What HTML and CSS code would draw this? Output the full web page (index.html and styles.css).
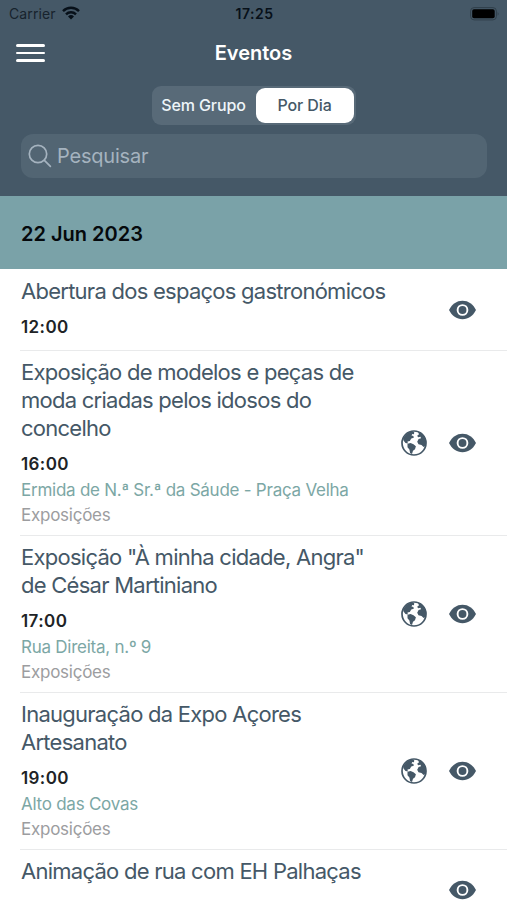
FILE: index.html
```html
<!DOCTYPE html>
<html lang="pt">
<head>
<meta charset="utf-8">
<meta name="viewport" content="width=device-width, initial-scale=1">
<title>Eventos</title>
<link rel="stylesheet" href="styles.css">
</head>
<body>
<svg class="defs" aria-hidden="true">
  <symbol id="eye" viewBox="0 0 28 20">
    <path d="M.5 10C3.500 4.200 8 .8 14 .8S24.500 4.200 27.500 10C24.500 15.800 20 19.200 14 19.200S3.500 15.800 .5 10Z" fill="currentColor"/>
    <circle cx="14" cy="10" r="4.900" fill="none" stroke="#fff" stroke-width="1.900"/>
  </symbol>
  <symbol id="globe" viewBox="0 0 26 26">
    <circle cx="13" cy="13" r="12" fill="#fff" stroke="currentColor" stroke-width="1.700"/>
    <path d="M2 8.500 5.500 3.700 10 1.300 13.200 2 13 4.300 11.300 4 10.500 5.400 12.400 5.900 12.800 7.800 10.300 8.600 8.800 10.900 6.500 11.600 6.800 13.400 4.500 13 2.500 10.500Z" fill="currentColor"/>
    <path d="M6.500 13.700 9.500 13 12.500 14.200 14.900 16.200 14 19.200 12 20.800 11 23.900 9.100 23 8.400 19.500 6.500 17.300Z" fill="currentColor"/>
    <path d="M16.800 1.500 20.500 3 23.700 6.500 25 11.200 24.800 15.700 22.600 17 20.500 14.900 17.500 14.300 16.200 11.800 17.600 9 20 8.300 19.500 6.700 17.100 7.200 16.200 5.700 18 4.300Z" fill="currentColor"/>
  </symbol>
</svg>
<header class="header">
  <div class="status">
    <div class="carrier"><span>Carrier</span>
      <svg class="wifi" viewBox="0 0 18 14"><g fill="none" stroke="currentColor" stroke-width="2.400"><path d="M1 5.100A11.400 11.400 0 0 1 17 5.100"/><path d="M4 8.300A7.100 7.100 0 0 1 14 8.300"/></g><path d="M9 13.500 6 10.500A4.300 4.300 0 0 1 12 10.500Z" fill="currentColor"/></svg>
    </div>
    <time>17:25</time>
    <svg class="battery" viewBox="0 0 30 14"><rect x=".6" y=".6" width="25.800" height="12.300" rx="3.500" fill="none" stroke="#303f4a" stroke-width="1"/><rect x="2.200" y="2.200" width="22.500" height="9.100" rx="1.800"/><path d="M27.700 4.700Q29.500 6.700 27.700 8.700Z" fill="#303f4a"/></svg>
  </div>
  <nav class="navbar">
    <button class="menu" aria-label="Menu"><i></i><i></i><i></i></button>
    <h1>Eventos</h1>
  </nav>
  <div class="segments"><span class="segment">Sem Grupo</span><span class="segment active">Por Dia</span></div>
  <div class="search">
    <svg viewBox="0 0 24 24"><g fill="none" stroke="currentColor" stroke-width="1.700" stroke-linecap="round"><circle cx="10" cy="10" r="8.700"/><path d="m16.400 16.400 6 6"/></g></svg>
    <span>Pesquisar</span>
  </div>
</header>
<main>
  <h2 class="day"><span>22 Jun 2023</span></h2>
  <article class="event short first">
    <div class="info"><h3>Abertura dos espaços gastronómicos</h3><time>12:00</time></div>
    <div class="icons"><svg class="eye"><use href="#eye"/></svg></div>
  </article>
  <article class="event tall">
    <div class="info"><h3>Exposição de modelos e peças de<br>moda criadas pelos idosos do<br>concelho</h3><time>16:00</time><p class="place">Ermida de N.ª Sr.ª da Sáude - Praça Velha</p><p class="category">Exposições</p></div>
    <div class="icons"><svg class="globe"><use href="#globe"/></svg><svg class="eye"><use href="#eye"/></svg></div>
  </article>
  <article class="event">
    <div class="info"><h3>Exposição "À minha cidade, Angra"<br>de César Martiniano</h3><time>17:00</time><p class="place">Rua Direita, n.º 9</p><p class="category">Exposições</p></div>
    <div class="icons"><svg class="globe"><use href="#globe"/></svg><svg class="eye"><use href="#eye"/></svg></div>
  </article>
  <article class="event">
    <div class="info"><h3>Inauguração da Expo Açores<br>Artesanato</h3><time>19:00</time><p class="place">Alto das Covas</p><p class="category">Exposições</p></div>
    <div class="icons"><svg class="globe"><use href="#globe"/></svg><svg class="eye"><use href="#eye"/></svg></div>
  </article>
  <article class="event last">
    <div class="info"><h3>Animação de rua com EH Palhaças</h3></div>
    <div class="icons"><svg class="eye"><use href="#eye"/></svg></div>
  </article>
</main>
</body>
</html>
```
FILE: styles.css
```css
* { box-sizing: border-box; margin: 0; padding: 0; }
body { height: 900px; overflow: hidden; background: #fff; font-family: Inter, sans-serif; color: #455867; white-space: nowrap; }
svg { display: block; flex: none; }
.defs { display: none; }
.header { height: 196px; background: #455867; }
.status { height: 27px; padding: 0 7px 0 9px; display: grid; grid-template-columns: 1fr auto 1fr; align-items: center; color: #071019; font-size: 14px; }
.carrier { display: flex; align-items: center; gap: 6px; letter-spacing: .1px; color: #17232d; }
.wifi { width: 18px; height: 14px; color: #071019; margin-top: -1px; }
.status time { font-weight: 600; letter-spacing: .5px; }
.battery { width: 30px; height: 14px; justify-self: end; }
.navbar { height: 59px; padding: 0 16px 7px; display: grid; grid-template-columns: 30px 1fr 30px; align-items: center; }
.menu { border: 0; background: none; display: grid; gap: 4.500px; }
.menu i { width: 29px; height: 2.700px; border-radius: 2px; background: #fff; }
.navbar h1 { text-align: center; color: #fff; font-size: 20px; font-weight: 600; letter-spacing: 0; }
.segments { width: 204px; height: 39px; margin: 0 auto; border-radius: 9px; background: #586a78; display: grid; grid-template-columns: 104px 98px; padding: 2px 0; font-size: 16px; }
.segment { display: flex; align-items: center; justify-content: center; color: #eef5f9; font-weight: 500; letter-spacing: -.1px; padding-bottom: 1px; }
.segment.active { color: #455867; background: #fff; border-radius: 9px; }
.search { height: 44px; margin: 9px 20px 0 21px; padding-left: 7px; border-radius: 12px; background: #526573; display: flex; align-items: center; gap: 5px; color: #a5b3bf; font-size: 20px; letter-spacing: -.2px; }
.search svg { width: 24px; height: 24px; }
.day { height: 73px; padding: 2px 0 0 21px; background: #7aa2a8; display: flex; align-items: center; color: #05090c; font-size: 20px; font-weight: 600; }
.event { height: 157px; margin-left: 20px; padding: 7px 30px 0 1px; border-bottom: 1px solid #e9eaeb; display: flex; justify-content: space-between; }
.event.short { height: 82px; }
.event.first .info { padding-top: 1px; }
.event.tall { height: 185px; }
.event.last { height: 80px; }
.info h3 { font-size: 22px; line-height: 28px; font-weight: 400; margin-bottom: 9px; letter-spacing: -.74px; }
.info time { display: block; font-size: 17px; line-height: 27px; font-weight: 600; color: #202326; letter-spacing: .4px; }
.place, .category { font-size: 17px; letter-spacing: -.25px; }
.place { line-height: 25px; color: #7ca7a5; }
.category { line-height: 24px; color: #9c9d9f; }
.icons { display: flex; align-items: center; gap: 21px; margin-top: -7px; color: #455867; }
.eye { width: 29px; height: 20px; }
.globe { width: 26px; height: 26px; }
```
